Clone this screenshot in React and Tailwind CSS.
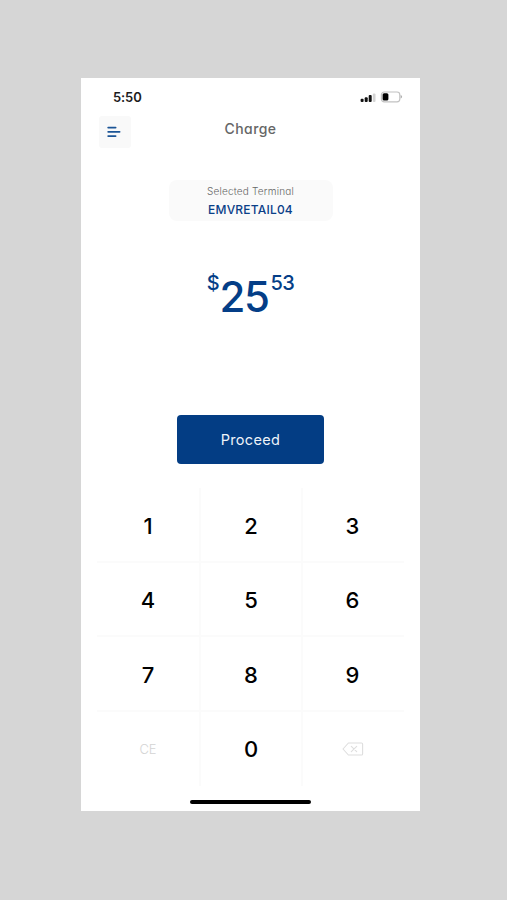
import React from 'react';

const KEYS = ['1', '2', '3', '4', '5', '6', '7', '8', '9', 'CE', '0', 'del'];

function SignalIcon() {
  return (
    <svg width="16" height="10" viewBox="0 0 16 10" className="mt-[1px]">
      <rect x="0.6" y="5.7" width="3" height="3.4" rx="1" fill="#111" />
      <rect x="4.7" y="4.2" width="3" height="4.9" rx="1" fill="#111" />
      <rect x="8.7" y="2" width="3" height="7.1" rx="1" fill="#111" />
      <rect x="12.8" y="0.4" width="2.7" height="8.7" rx="1" fill="#d4d4d4" />
    </svg>
  );
}

function BatteryIcon() {
  return (
    <svg width="23" height="12" viewBox="0 0 23 12">
      <rect x="1.4" y="1" width="18.4" height="9.8" rx="2.8" fill="none" stroke="#c2c2c2" strokeWidth="1.2" />
      <rect x="2.6" y="2.3" width="5.8" height="7.2" rx="1.5" fill="#000" />
      <path d="M20.6 4v3.6c.9-.4 1.5-1 1.5-1.8s-.6-1.4-1.5-1.8z" fill="#b0b0b0" />
    </svg>
  );
}

function MenuIcon() {
  return (
    <svg width="14" height="12" viewBox="0 0 14 12" fill="none" stroke="#1c5596" strokeWidth="1.8" strokeLinecap="round">
      <path d="M1.2 1.6h7.4" />
      <path d="M1.2 5.8h11.4" />
      <path d="M1.2 10.1h7.4" />
    </svg>
  );
}

function BackspaceIcon() {
  return (
    <svg width="22" height="14" viewBox="0 0 22 14" fill="none" stroke="#dedede" strokeWidth="1.1" strokeLinecap="round" strokeLinejoin="round">
      <path d="M6.4 1h13.1c.7 0 1.1.4 1.1 1.1v9.8c0 .7-.4 1.1-1.1 1.1H6.4L1 7z" />
      <path d="M9.3 4.3l5.4 5.4M14.7 4.3L9.3 9.7" />
    </svg>
  );
}

function Key({ value, index }) {
  const lastCol = index % 3 === 2;
  const lastRow = index > 8;
  return (
    <button
      type="button"
      className={`flex items-center justify-center border-[#fbfbfb] ${lastCol ? 'pr-[2px]' : 'border-r-2'} ${lastRow ? '' : 'border-b-2 pt-[3px]'}`}
    >
      {value === 'del' && <BackspaceIcon />}
      {value === 'CE' && <span className="pt-[1px] text-[13px] font-light text-[#d4d4d4]">CE</span>}
      {value !== 'del' && value !== 'CE' && (
        <span className="text-[22px] leading-none font-medium text-black">{value}</span>
      )}
    </button>
  );
}

export default function App() {
  return (
    <div className="flex h-[900px] w-[507px] justify-center overflow-hidden bg-[#d6d6d6] pt-[78px] pr-[6px] font-['Inter',sans-serif] [font-feature-settings:'cv11']">
      <div className="flex h-[733px] w-[339px] flex-col items-center bg-white">
        {/* Status bar */}
        <div className="flex h-[38px] w-full shrink-0 items-center justify-between pr-[17px] pl-[32px]">
          <span className="text-[13px] leading-none font-semibold tracking-[-0.1px] text-[#1c1c1c]">5:50</span>
          <div className="flex items-center gap-[4px]">
            <SignalIcon />
            <BatteryIcon />
          </div>
        </div>

        {/* Header */}
        <div className="grid h-[32px] w-full shrink-0 grid-cols-[32px_1fr_32px] px-[18px]">
          <button type="button" className="flex items-center justify-center rounded-[3px] bg-[#f9f9f9] pr-[2px]">
            <MenuIcon />
          </button>
          <h1 className="pt-[4px] text-center text-[14px] leading-[18px] font-medium tracking-[0.4px] text-[#666]">
            Charge
          </h1>
        </div>

        {/* Selected terminal */}
        <div className="mt-[32px] flex h-[41px] w-[164px] shrink-0 flex-col items-center rounded-[8px] bg-[#fafafa] pt-[4px]">
          <span className="text-[10px] leading-[14px] font-light tracking-[0.2px] text-[#666]">Selected Terminal</span>
          <span className="mt-[3px] text-[12px] leading-[17px] font-medium tracking-[0.2px] text-[#0a4088]">EMVRETAIL04</span>
        </div>

        {/* Amount */}
        <div className="mt-[50px] flex h-[50px] shrink-0 items-start text-[#043e87]">
          <span className="mt-[2px] text-[20px] leading-[20px] font-medium">$</span>
          <span className="mt-[5px] text-[42px] leading-[42px] font-medium tracking-[-1.5px]">25</span>
          <span className="mt-[2px] ml-[2px] text-[20px] leading-[20px] font-medium tracking-[-0.5px]">53</span>
        </div>

        <button
          type="button"
          className="mt-[94px] h-[49px] w-[147px] shrink-0 rounded-[4px] bg-[#033d84] text-[14.5px] tracking-[0.35px] text-[#eef3f9]"
        >
          Proceed
        </button>

        {/* Keypad */}
        <div className="mt-[24px] grid h-[298px] w-[307px] shrink-0 grid-cols-[104px_102px_101px] grid-rows-4">
          {KEYS.map((value, i) => (
            <Key key={value} value={value} index={i} />
          ))}
        </div>

        <div className="mt-[14px] h-[4px] w-[121px] shrink-0 rounded-full bg-black" />
      </div>
    </div>
  );
}
